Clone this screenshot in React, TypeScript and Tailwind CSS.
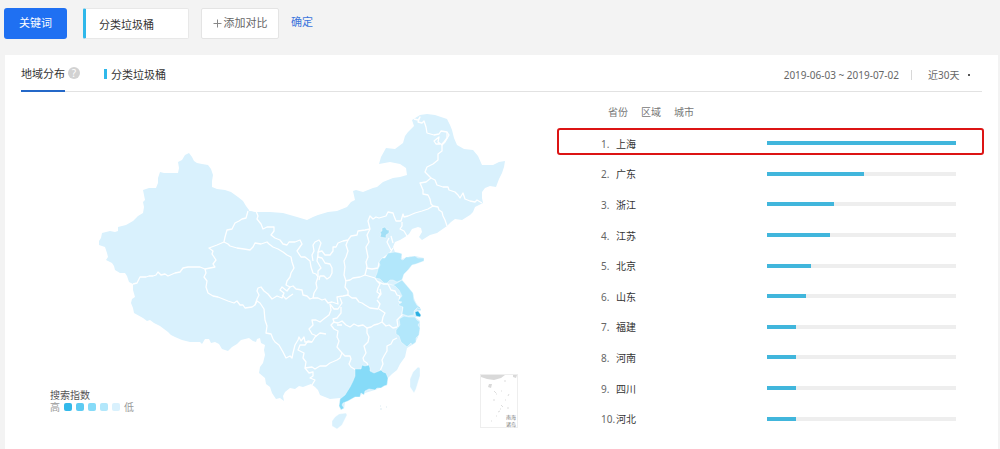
import { useState } from "react";

const LEVELS = ["bg-[#33b9ea]", "bg-[#5dcbf2]", "bg-[#86dbf8]", "bg-[#b2e7fb]", "bg-[#d9f1fd]"];

const REGION_TABS = ["省份", "区域", "城市"];

const ranking = [
  { name: "上海", value: 100 },
  { name: "广东", value: 51.4 },
  { name: "浙江", value: 35.4 },
  { name: "江苏", value: 33.4 },
  { name: "北京", value: 23.2 },
  { name: "山东", value: 20.5 },
  { name: "福建", value: 15.6 },
  { name: "河南", value: 15.6 },
  { name: "四川", value: 15.6 },
  { name: "河北", value: 15.1 },
];

const MAINLAND =
  "M143 190L149 188L156 188L158 183L158 178L160 172L164 173L170 173L178 173L179 168L178 162L182 160L185 155L189 153L192 157L194 161L197 163L202 164L208 165L211 169L213 175L212 181L212 187L217 189L225 190L231 192L238 197L243 201L246 206L249 210L255 212L270 212L283 213L290 215L297 217L307 220L313 217L318 215L328 212L337 211L347 207L351 202L355 200L353 191L356 190L363 192L373 188L377 187L383 182L393 178L400 177L407 175L406 168L400 164L390 162L379 164L381 157L386 148L395 149L403 143L405 136L408 132L414 126L412 120L420 115L427 114L435 115L441 117L447 119L450 125L452 130L454 138L457 145L464 149L473 150L478 156L482 165L493 165L499 162L505 161L504 167L502 173L499 179L496 187L490 186L485 188L482 192L482 198L483 203L475 207L473 212L470 215L462 220L455 219L451 222L447 226L437 233L430 235L422 240L419 237L422 232L421 228L418 227L412 229L409 234L405 237L400 240L395 242L393 247L395 252L402 254L402 259L408 257L415 256L424 258L420 262L412 265L408 270L403 275L402 280L408 287L413 293L414 298L416 303L421 309L418 312L421 316L415 317L420 321L420 328L418 337L415 343L412 345L407 348L405 357L400 364L397 370L392 374L388 378L387 385L375 390L365 393L355 397L345 402L344 409L340 407L340 398L330 399L320 395L318 390L315 387L311 384L303 387L299 386L295 389L290 388L285 392L283 396L284 401L280 398L276 399L272 393L270 387L266 384L265 378L259 373L260 367L263 363L265 355L264 350L265 345L261 343L260 338L257 339L256 342L253 341L249 338L245 339L241 340L237 344L232 347L228 351L222 349L219 344L215 342L211 343L209 339L205 339L202 344L200 342L190 342L182 340L175 337L171 335L168 332L160 326L154 323L150 320L147 321L143 318L134 313L133 308L131 303L132 299L135 297L133 290L133 284L129 282L127 276L125 273L120 273L115 270L114 266L112 263L106 260L108 257L107 253L105 247L102 246L99 245L99 241L101 238L102 233L110 231L115 232L118 231L118 227L126 225L133 221L138 216L143 213L144 207L143 202L145 200L144 195Z";

const BORDERS = [
  "M133 284L137 283L140 277L146 277L149 276L153 276L156 275L158 272L161 275L165 274L168 276L175 273L180 272L183 268L188 267L193 267L200 267L205 269L210 268L215 267L213 264L216 260L212 254L213 251L209 248L217 245L224 242L225 237L227 230L232 229L235 223L239 221L242 219L246 218L248 211",
  "M224 242L228 244L230 246L237 248L244 249L250 250L253 247L255 243L261 244L267 242L269 244L273 247L278 249L283 252L287 255L291 257L292 262L294 268L291 273L290 277L287 281L286 285L290 287L287 291L282 287L280 290L284 293L282 298L277 296L272 299L268 294L264 291L261 287L258 288L257 291L259 295L257 299L255 305",
  "M205 269L206 273L204 277L207 281L206 287L208 293L213 296L218 297L223 299L228 301L234 303L237 301L240 305L243 305L245 308L252 307L255 305L257 301L260 303L264 309L265 320L267 326L266 333L271 334L273 339L275 342L279 345L283 352L286 358L290 356L292 358L293 353L295 345L298 340L299 337L301 341L304 337L305 342L312 342L315 337L320 333L326 334",
  "M249 210L256 211L258 216L257 219L261 224L263 229L267 227L274 227L274 231L271 235L275 238L280 240L283 244L287 245L289 242L295 242L300 240L302 244L297 251L301 257L305 257L310 261L311 267L313 273L316 274L318 277L316 283L317 288L314 293L313 298",
  "M313 261L312 255L314 251L313 245L315 242L319 240L321 243L318 252L322 251L325 255L330 255L333 251L333 247L336 247L338 243L343 241L348 240L351 236L357 235L358 231L365 230L370 229",
  "M318 252L318 257L322 258L325 263L330 264L332 268L332 273L330 277L327 279L324 276L320 276L319 280M318 254L317 261L321 268L318 271L318 277",
  "M348 240L346 245L348 251L346 257L344 261L345 267L344 275L346 281L345 287L348 291L348 295M345 281L350 280L353 278L360 277L365 275L375 278",
  "M290 287L293 286L296 289L302 290L303 295L307 296L310 299L313 298L318 298L322 300L325 299L328 303L332 302L338 304L337 297L343 296L348 295L352 298L356 298L359 302L362 303L365 305L370 308L378 309L380 304L377 300",
  "M282 295L286 299L290 296L293 294M330 304L331 310L329 315L325 318L320 322L316 320L312 320L313 325L309 329L312 334L317 336",
  "M330 304L334 309L338 309L342 303L340 298M341 307L341 313L337 318L333 319L334 322L331 325L334 329L338 331L337 337L339 341L337 347L342 353L340 358L337 360L330 363L326 366L320 366L315 369L312 367L305 368L306 362L303 358L304 353L298 350L300 345L305 345L308 341L312 342",
  "M333 322L338 323L342 321L346 325L350 327L354 324L358 326L363 325L367 328L371 327L374 325L378 324L382 322L383 317L385 313L379 309M337 325L342 325",
  "M367 328L367 333L369 337L368 342L364 346L366 353L363 358L364 361L367 363L368 366M382 322L386 326L389 325L393 328L397 327M397 338L393 340L391 344L387 346L387 351L384 356L382 360L383 364L380 371",
  "M342 353L345 356L350 356L351 359L349 364L351 367L356 370M305 368L309 373L313 372L313 376L310 378L315 380L312 385",
  "M375 278L377 281L380 284L378 288L377 292L380 294L378 298L381 294L380 289M377 281L383 284L388 284L391 290L395 291L397 295L400 296L399 301L403 307L402 315L397 320L398 327",
  "M414 119L418 120L420 117L418 122L422 123L424 121L426 127L427 133L434 135L439 134L441 131L447 132L447 138L444 142L442 144L442 151L438 154L438 160L433 164L427 167L425 172L429 176L431 178L426 182L420 183L423 190L423 194L428 195L430 199L431 204L433 206",
  "M447 132L449 135L445 142L442 145L438 142L439 137L434 141L436 144L440 144M431 178L435 180L437 185L443 187L448 187L449 190L455 192L458 195L460 198L463 193L465 199L470 201L475 202L477 200L482 203",
  "M433 206L438 207L439 210L442 212L443 216L445 220L447 226M433 206L428 209L422 211L415 213L408 216L404 217L403 214L401 221L396 221L394 216L393 213L388 212L386 216L379 218L376 217L373 219L370 216L368 221L370 229L367 235L369 242L366 247L368 257L366 262L367 267L365 275",
  "M402 222L402 226L400 229L404 231L407 236M366 268L372 269L378 268L379 263L382 259L390 253L393 248M389 238L387 242L389 246L391 250M391 236L393 243",
];

const SHADED = [
  { id: "shandong", fill: "#b2e7fb", d: "M375 278L377 273L378 269L380 265L379 262L382 258L385 258L388 253L395 252L400 253L402 254L401 259L403 260L406 257L408 257L415 256L418 258L424 258L424 261L416 264L412 265L408 270L404 274L402 280L397 282L393 280L390 280L387 283L384 283L380 279Z" },
  { id: "jiangsu", fill: "#b2e7fb", d: "M389 284L393 285L397 283L402 280L408 287L413 293L414 300L418 307L414 311L414 315L408 316L402 314L403 307L398 305L402 302L398 301L402 296L399 290L395 286Z" },
  { id: "zhejiang", fill: "#b2e7fb", d: "M399 319L404 316L409 317L415 317L417 320L420 322L418 325L420 328L419 335L416 338L416 342L412 345L411 343L407 347L401 342L399 336L396 334L396 330L400 325Z" },
  { id: "beijing", fill: "#a2dff6", d: "M380 232L382 231L382 228L385 227L387 230L389 230L389 233L386 235L386 238L380 237L381 234Z" },
  { id: "guangdong", fill: "#86dbf8", d: "M362 365L365 366L369 365L370 368L370 371L374 373L379 371L381 370L383 372L386 373L388 378L387 385L384 386L381 388L377 388L375 390L369 389L365 391L364 395L361 393L360 397L355 397L348 401L343 403L342 405L344 408L341 410L339 406L340 399L345 395L350 387L353 381L355 376L355 369L361 369Z" },
  { id: "shanghai", fill: "#2aafe2", d: "M415 312L418 311L421 315L420 317L416 316Z" },
  { id: "hainan", fill: "#d9f1fd", d: "M335 417L339 414L346 413L347 415L342 425L337 429L332 426L332 421Z" },
  { id: "taiwan", fill: "#d9f1fd", d: "M418 367L420 368L420 376L416 389L414 393L410 387L410 379L413 372Z" },
];

function ChinaMap() {
  return (
    <svg viewBox="21 100 536 345" className="block w-full" role="img" aria-label="地域分布">
      <path d={MAINLAND} fill="#d9f1fd" />
      <g fill="none" stroke="#fff" strokeWidth="1.3" strokeLinejoin="round">
        {BORDERS.map((d) => (
          <path key={d} d={d} />
        ))}
      </g>
      {SHADED.map((p) => (
        <path key={p.id} d={p.d} fill={p.fill} stroke="#fff" strokeWidth="0.4" />
      ))}
      <path d="M416 306L420 308M417 309L421 310" stroke="#b2e7fb" fill="none" />
      <path d="M380 406h1M380 409h2M386 407h1" stroke="#dcebf1" fill="none" />

      {/* south china sea inset */}
      <rect x="480.5" y="374.5" width="37" height="53" fill="none" stroke="#eee" />
      <path
        d="M481 375H505L501 378L494 380L487 379L481 377ZM513 375H517L516 378L513 377ZM489 384L492 384L491 388L488 387Z"
        fill="#d9d9d9"
      />
      <path
        d="M504 381h2M494 391l2 2M496 394h1M501 391h1M509 394l-1 2M493 400h2M501 405l2 2M507 408h2M500 409h1M496 416h1M491 421h1M498 412l2-1M505 400h1"
        stroke="#ddd"
        fill="none"
      />
      <g fill="#777" fontSize="5" className="font-['Noto_Sans_CJK_SC',sans-serif]">
        <text x="506" y="419">南海</text>
        <text x="506" y="426">诸岛</text>
      </g>
    </svg>
  );
}

function Legend() {
  return (
    <div className="absolute bottom-8 left-[29px] text-[10px] leading-3 text-[#555]">
      <p>搜索指数</p>
      <div className="flex items-center gap-1 text-[#999]">
        <span>高</span>
        {LEVELS.map((level) => (
          <span key={level} className={`h-2 w-2 rounded-xs ${level}`} />
        ))}
        <span>低</span>
      </div>
    </div>
  );
}

export default function App() {
  const [keyword, setKeyword] = useState("分类垃圾桶");
  const [range, setRange] = useState("30");

  return (
    <div className="flex min-h-screen flex-col bg-[#f3f3f3] font-['Noto_Sans','Noto_Sans_CJK_SC',sans-serif] text-[11px] text-[#333]">
      <header className="flex items-center px-1 pt-2 pb-4">
        <button className="h-[31px] w-[63px] rounded-[3px] bg-[#1f70f2] text-white">关键词</button>
        <input
          aria-label="关键词"
          value={keyword}
          onChange={(e) => setKeyword(e.target.value)}
          className="ml-4 h-[31px] w-[106px] rounded-[2px] border border-l-3 border-[#e8e8e8] border-l-[#2fb8ea] bg-white pl-[13px] outline-none"
        />
        <button className="ml-3 flex h-[31px] w-[78px] items-center justify-center gap-0.5 rounded-[2px] border border-[#e4e4e4] bg-white text-[#666]">
          <svg viewBox="0 0 9 9" className="h-[9px] w-[9px]" stroke="#888" aria-hidden="true">
            <path d="M4.5 0.5v8M0.5 4.5h8" />
          </svg>
          添加对比
        </button>
        <button className="ml-3 pb-0.5 text-[#3b75dc]">确定</button>
      </header>

      <main className="mr-0.5 ml-[5px] flex-1 bg-white px-4">
        <div className="flex h-[37px] items-stretch border-b border-[#e2e2e2]">
          <h2 className="-mb-px border-b-2 border-[#2468c8] pt-[11px] leading-4">地域分布</h2>
          <span className="mt-3 ml-[3px] flex h-3 w-3 items-center justify-center rounded-full bg-[#d2d2d2] text-[10px] text-white">
            ?
          </span>
          <span className="mt-3.5 ml-6 h-2.5 w-[3px] bg-[#2fb8ea]" />
          <span className="ml-1 pt-3 leading-4">{keyword}</span>

          <div className="ml-auto flex items-center pt-1 text-[10px] text-[#666]">
            <span>2019-06-03 ~ 2019-07-02</span>
            <span className="mx-3 h-2.5 w-px bg-[#d8d8d8]" />
            <label className="relative flex w-[58px] items-center pl-1">
              <select
                aria-label="时间范围"
                value={range}
                onChange={(e) => setRange(e.target.value)}
                className="w-full appearance-none bg-transparent outline-none"
              >
                <option value="7">近7天</option>
                <option value="30">近30天</option>
                <option value="90">近90天</option>
              </select>
              <span className="pointer-events-none absolute right-3 h-0.5 w-0.5 bg-[#555]" />
            </label>
          </div>
        </div>

        <div className="grid grid-cols-[536fr_425fr]">
          <div className="relative pt-2">
            <ChinaMap />
            <Legend />
          </div>

          <div className="pt-3">
            <nav className="flex gap-[13px] pl-[51px] text-[10px] leading-4 text-[#777]">
              {REGION_TABS.map((tab) => (
                <button key={tab}>{tab}</button>
              ))}
            </nav>
            <ol className="mt-2 flex h-[306px] flex-col text-[10px]">
              {ranking.map((item, i) => (
                <li
                  key={item.name}
                  className="relative grid flex-1 grid-cols-[166px_1fr] items-center pt-0.5 pr-[26px] pl-11"
                >
                  {i === 0 && (
                    <span className="pointer-events-none absolute inset-x-0 top-0 -mr-0.5 h-[27px] rounded-[3px] border-2 border-[#dc1414]" />
                  )}
                  <span className="flex">
                    <span className="w-[15px] whitespace-nowrap text-[#666]">{i + 1}.</span>
                    <span>{item.name}</span>
                  </span>
                  <span className="mb-0.5 h-1 bg-[#eee]">
                    <span className="block h-full bg-[#41b6dc]" style={{ width: `${item.value}%` }} />
                  </span>
                </li>
              ))}
            </ol>
          </div>
        </div>
      </main>
    </div>
  );
}
